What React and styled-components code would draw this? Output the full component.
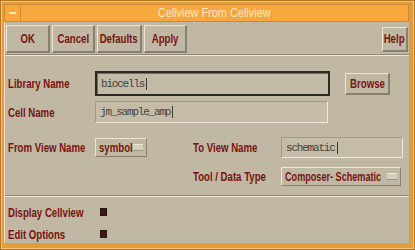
import React from "react";
import styled, { createGlobalStyle } from "styled-components";

const SANS = `"Liberation Sans", Arial, sans-serif`;
const MONO = `"Liberation Mono", "DejaVu Sans Mono", monospace`;

const GlobalStyle = createGlobalStyle`
  html, body {
    margin: 0;
    padding: 0;
    background: #c0b8a2;
  }
  body {
    width: 415px;
    height: 250px;
    overflow: hidden;
  }
`;

// X resources used a narrow Helvetica; squeeze Liberation Sans to match
const Narrow = styled.span`
  display: inline-block;
  white-space: nowrap;
  transform: scaleX(${(p) => p.$k || 0.74});
  transform-origin: ${(p) => p.$origin || "left"} center;
`;

const Frame = styled.div`
  box-sizing: border-box;
  width: 415px;
  height: 250px;
  background: #e29c3c;
  border: 1px solid #b8741f;
  box-shadow: inset 1px 1px 0 #f7c67c, inset -1px -1px 0 #f7c67c;
  padding: 3px 5px 6px 3px;
  display: flex;
  flex-direction: column;
`;

const TitleBar = styled.div`
  box-sizing: border-box;
  height: 18px;
  display: flex;
  background: #f6a83e;
  border: 1px solid #cf8a32;
`;

const MenuBox = styled.div`
  width: 15px;
  border-right: 1px solid #cf8a32;
  display: flex;
  align-items: center;
  justify-content: center;

  &::before {
    content: "";
    width: 7px;
    height: 2px;
    background: #fde4bc;
  }
`;

const Title = styled.div`
  flex: 1;
  display: flex;
  justify-content: center;
  font-family: ${SANS};
  font-size: 13px;
  line-height: 16px;
  color: #fde6c4;
`;

const Body = styled.div`
  flex: 1;
  background: #c0b8a2;
  display: flex;
  flex-direction: column;
  border-left: 1px solid #efe3c8;
`;

const Toolbar = styled.div`
  display: flex;
  align-items: center;
  gap: 2px;
  padding: 3px 0 1px 1px;
`;

const raised = `
  box-sizing: border-box;
  background: #c0b8a2;
  border-style: solid;
  border-width: 1px 2px 2px 1px;
  border-color: #ece6d6 #858070 #858070 #ece6d6;
`;

const ToolButton = styled.button`
  ${raised}
  width: ${(p) => p.$w}px;
  height: ${(p) => p.$h || 28}px;
  margin-left: ${(p) => (p.$right ? "auto" : "0")};
  margin-right: ${(p) => (p.$right ? "1px" : "0")};
  padding: 0;
  display: flex;
  align-items: center;
  justify-content: center;
  overflow: visible;
  font-family: ${SANS};
  font-weight: bold;
  font-size: 13px;
  color: #7a1212;
`;

const Groove = styled.div`
  border-top: 1px solid #8f8874;
  border-bottom: 1px solid #ebe5d6;
  margin-top: ${(p) => p.$top || 0}px;
`;

const Form = styled.div`
  display: flex;
  flex-direction: column;
  padding: 0 3px;
`;

const Row = styled.div`
  display: flex;
  align-items: center;
  margin-top: ${(p) => p.$top}px;
  height: ${(p) => p.$h}px;
`;

const Label = styled.div`
  flex: none;
  width: ${(p) => (p.$w ? `${p.$w}px` : "auto")};
  grid-column: ${(p) => p.$col || "auto"};
  overflow: visible;
  font-family: ${SANS};
  font-weight: bold;
  font-size: 13px;
  color: #7a1212;
`;

const Field = styled.div`
  box-sizing: border-box;
  width: ${(p) => p.$w}px;
  height: ${(p) => p.$h}px;
  display: flex;
  align-items: center;
  padding-left: 4px;
  font-family: ${MONO};
  font-size: 11px;
  letter-spacing: -1.2px;
  color: #44443e;
  background: ${(p) => (p.$focus ? "#c2baa5" : "#c4bca7")};
  border-style: solid;
  border-width: ${(p) => (p.$focus ? "2px" : "1px")};
  border-color: ${(p) =>
    p.$focus ? "#2a2a24" : "#a29a86 #f0eadc #f0eadc #a29a86"};
  box-shadow: ${(p) => (p.$focus ? "inset 1px 1px 0 #777060" : "none")};
`;

const Caret = styled.span`
  display: inline-block;
  width: 1px;
  height: 12px;
  margin-left: 2px;
  background: #3a3a34;
`;

const BrowseButton = styled.button`
  ${raised}
  width: 45px;
  height: 22px;
  margin-left: 15px;
  padding: 0;
  display: flex;
  align-items: center;
  justify-content: center;
  font-family: ${SANS};
  font-weight: bold;
  font-size: 13px;
  color: #7a1212;
`;

const ViewGrid = styled.div`
  display: grid;
  grid-template-columns: 87px 98px 88px 1fr;
  grid-template-rows: 21px 19px;
  row-gap: 9px;
  align-items: center;
  margin-top: 14px;
`;

const Cycle = styled.div`
  ${raised}
  border-width: 1px;
  width: ${(p) => p.$w}px;
  height: 19px;
  display: flex;
  align-items: center;
  padding: 0 3px;
  overflow: hidden;
  font-family: ${SANS};
  font-weight: bold;
  font-size: 13px;
  color: #7a1212;
  grid-column: ${(p) => p.$col || "auto"};

  &::after {
    content: "";
    flex: none;
    margin-left: auto;
    width: 10px;
    height: 5px;
    background: #d4cebd;
    border-top: 1px solid #ece6d6;
    border-bottom: 1px solid #9a9482;
  }
`;

const CycleText = styled(Narrow)`
  flex: none;
  width: ${(p) => p.$w}px;
`;

const CheckBox = styled.span`
  display: inline-block;
  box-sizing: border-box;
  width: 7px;
  height: 8px;
  background: #4a1212;
  border: 1px solid #1e1a18;
`;

const TOOL_BUTTONS = [
  { text: "OK", w: 44 },
  { text: "Cancel", w: 43 },
  { text: "Defaults", w: 45 },
  { text: "Apply", w: 43 },
];

export default function App() {
  return (
    <>
      <GlobalStyle />
      <Frame>
        <TitleBar>
          <MenuBox />
          <Title>
            <Narrow $k={0.84} $origin="center">
              Cellview From Cellview
            </Narrow>
          </Title>
        </TitleBar>
        <Body>
          <Toolbar>
            {TOOL_BUTTONS.map((b) => (
              <ToolButton key={b.text} $w={b.w}>
                <Narrow $origin="center">{b.text}</Narrow>
              </ToolButton>
            ))}
            <ToolButton $w={26} $h={25} $right>
              <Narrow $origin="center">Help</Narrow>
            </ToolButton>
          </Toolbar>
          <Groove />
          <Form>
            <Row $top={15} $h={25}>
              <Label $w={87}>
                <Narrow>Library Name</Narrow>
              </Label>
              <Field $w={235} $h={25} $focus>
                biocells
                <Caret />
              </Field>
              <BrowseButton>
                <Narrow $origin="center">Browse</Narrow>
              </BrowseButton>
            </Row>
            <Row $top={5} $h={22}>
              <Label $w={87}>
                <Narrow>Cell Name</Narrow>
              </Label>
              <Field $w={233} $h={22}>
                jm_sample_amp
                <Caret />
              </Field>
            </Row>
            <ViewGrid>
              <Label>
                <Narrow>From View Name</Narrow>
              </Label>
              <Cycle $w={52}>
                <CycleText $w={34}>symbol</CycleText>
              </Cycle>
              <Label>
                <Narrow>To View Name</Narrow>
              </Label>
              <Field $w={122} $h={21}>
                schematic
                <Caret />
              </Field>
              <Label $col={3}>
                <Narrow>Tool / Data Type</Narrow>
              </Label>
              <Cycle $w={120} $col={4}>
                <CycleText $w={96} $k={0.7}>
                  Composer- Schematic
                </CycleText>
              </Cycle>
            </ViewGrid>
          </Form>
          <Groove $top={9} />
          <Form>
            <Row $top={7} $h={16}>
              <Label $w={92}>
                <Narrow>Display Cellview</Narrow>
              </Label>
              <CheckBox />
            </Row>
            <Row $top={6} $h={16}>
              <Label $w={92}>
                <Narrow>Edit Options</Narrow>
              </Label>
              <CheckBox />
            </Row>
          </Form>
        </Body>
      </Frame>
    </>
  );
}
